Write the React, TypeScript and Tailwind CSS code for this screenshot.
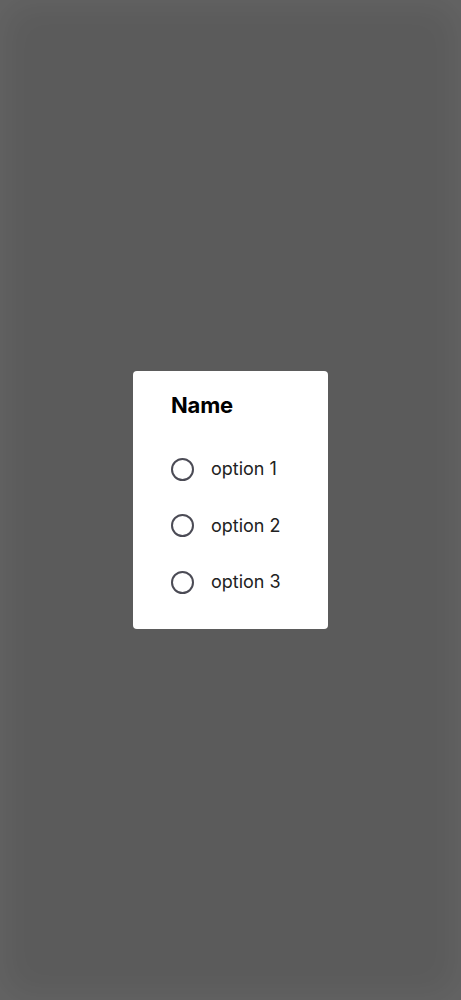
import { useState } from 'react';

const options = ['option 1', 'option 2', 'option 3'];

export default function App() {
  const [value, setValue] = useState<string | null>(null);

  return (
    <div className="flex h-[1000px] w-full items-center justify-center bg-[#5b5b5b] shadow-[inset_0_0_40px_rgba(255,255,255,0.07)] font-['Inter',sans-serif]">
      <div role="radiogroup" aria-label="Name" className="w-[195px] rounded-[4px] bg-white px-[38px] pb-[19px] pt-5">
        <h2 className="text-[22px] font-bold leading-[28px] tracking-[-0.2px] text-black">Name</h2>
        <div className="mt-[22px]">
          {options.map((o) => (
            <label key={o} className="flex h-[56.5px] cursor-pointer items-center gap-[17px]">
              <input type="radio" name="name" checked={value === o} onChange={() => setValue(o)} className="sr-only" />
              <span className="flex h-[23px] w-[23px] shrink-0 items-center justify-center rounded-full border-2 border-[#4b4b55]">
                {value === o && <span className="h-[11px] w-[11px] rounded-full bg-[#4b4b55]" />}
              </span>
              <span className="whitespace-nowrap text-[18px] leading-[24px] text-[#222]">{o}</span>
            </label>
          ))}
        </div>
      </div>
    </div>
  );
}
